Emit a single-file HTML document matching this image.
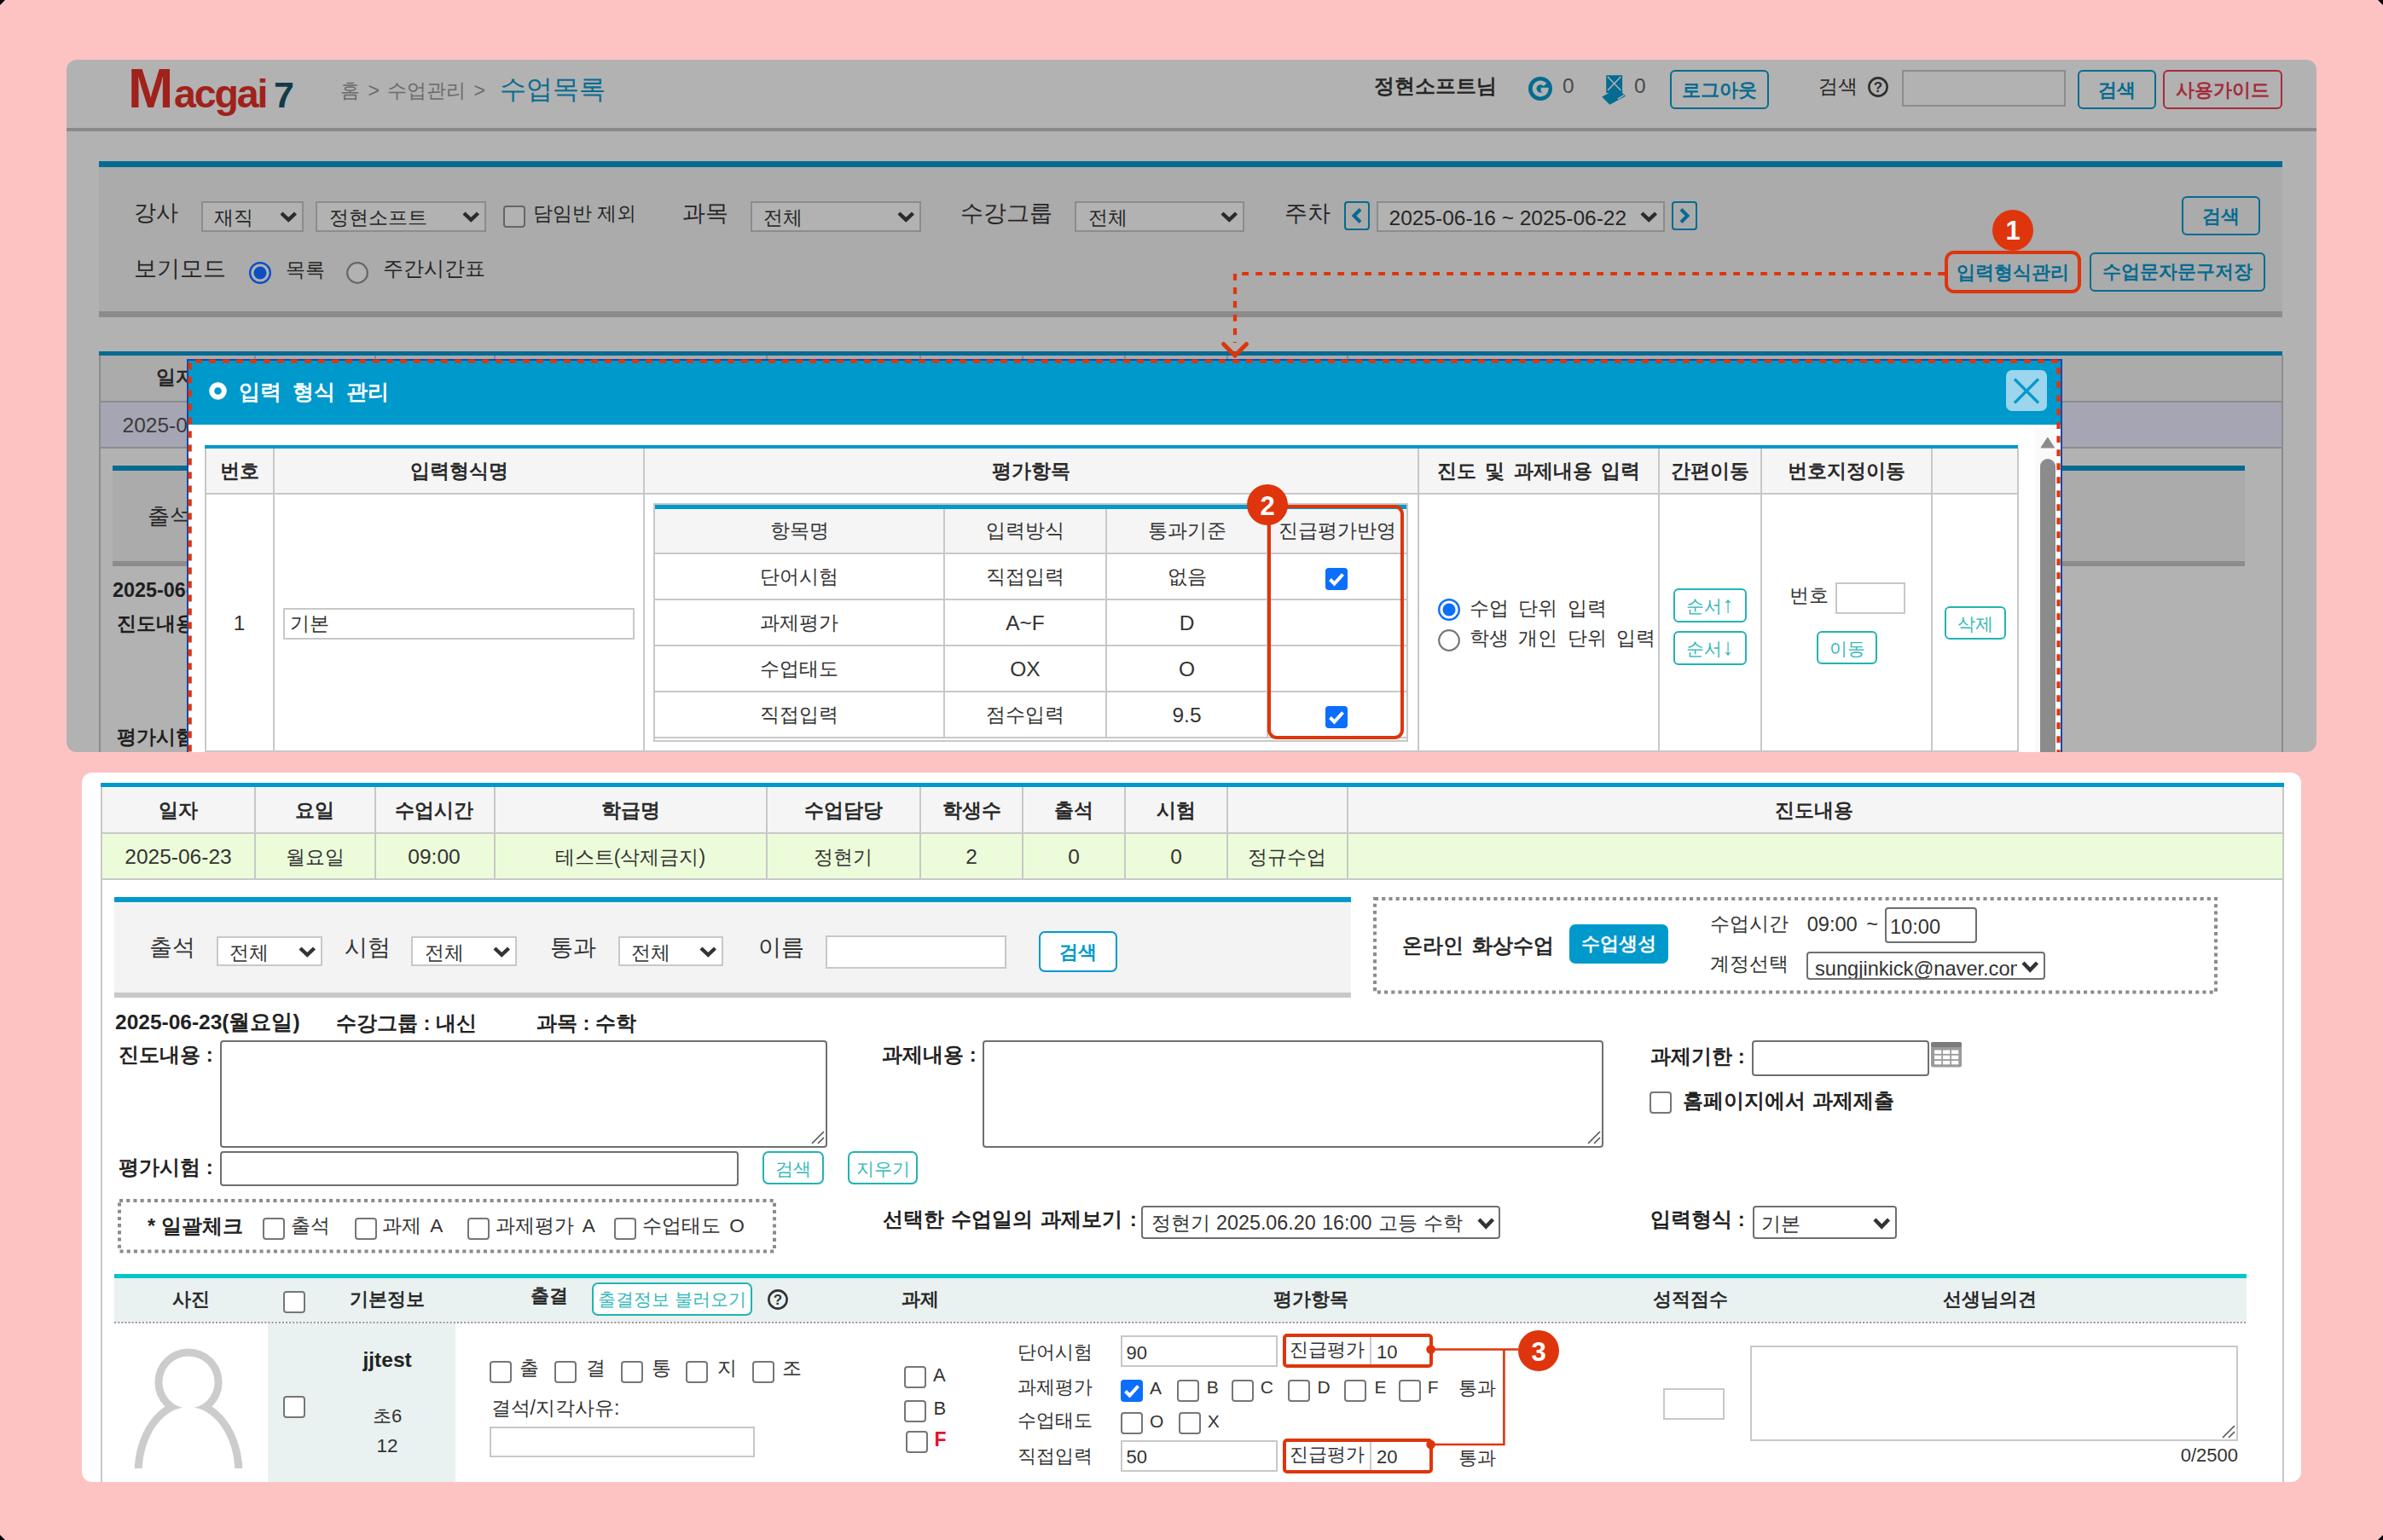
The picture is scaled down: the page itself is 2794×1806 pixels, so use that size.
<!DOCTYPE html>
<html lang="ko"><head><meta charset="utf-8"><title>Macgai7</title>
<style>
*{box-sizing:border-box;margin:0;padding:0}
html,body{width:2794px;height:1806px;overflow:hidden;background:#000}
body{font-family:"Liberation Sans",sans-serif;position:relative}
#pg{position:absolute;left:0;top:0;width:2794px;height:1806px;background:#FDC3C3;clip-path:polygon(6px 0,2788px 0,2794px 6px,2794px 1800px,2788px 1806px,6px 1806px,0 1800px,0 6px);overflow:hidden}
.a{position:absolute}
.t{position:absolute;white-space:nowrap;line-height:1}
svg{display:block;overflow:visible}
</style></head><body><div id="pg">
<div class="a" id="p1" style="left:78px;top:70px;width:2638px;height:812px;background:#B2B2B2;border-radius:12px;overflow:hidden"><div class="a" style="left:-78px;top:-70px;width:2794px;height:1806px">
<div class="a " style="left:78px;top:150px;width:2638px;height:4px;background:#8A8A8A"></div>
<div class="t" style="left:150px;top:71.824px;font-size:64px;color:#A0221B;font-weight:bold;letter-spacing:-2px">M</div>
<div class="t" style="left:204px;top:86.6377px;font-size:46.5px;color:#A0221B;font-weight:bold;letter-spacing:-2.1px">acgai</div>
<div class="t" style="left:321px;top:89.6005px;font-size:43px;color:#143B49;font-weight:bold;">7</div>
<div class="t" style="left:399px;top:94.5px;font-size:23px;color:#6B6B6B;word-spacing:3px">홈 &gt; 수업관리 &gt;</div>
<div class="t" style="left:586px;top:88.9px;font-size:31.2px;color:#0A6C90;">수업목록</div>
<div class="t" style="left:1611px;top:89.1px;font-size:23.8px;color:#262626;font-weight:bold;">정현소프트님</div>
<svg class="a" style="left:1792px;top:90px" width="28" height="28"><circle cx="14" cy="14" r="14" fill="#056B91"/><path d="M19.6,9.6 A7,7 0 1 0 21,15.2 L14.6,15.2" fill="none" stroke="#B2B2B2" stroke-width="4.8"/></svg>
<div class="t" style="left:1832px;top:88.75px;font-size:24.5px;color:#4A4A4A;">0</div>
<svg class="a" style="left:1876px;top:86px" width="32" height="38"><g fill="#056B91"><path d="M7.2,2.2 H26.1 V23 H7.2 Z"/><path d="M2.2,27.4 L11.3,36.8 L29.9,26.8 L20.5,17.5 Z"/></g><path d="M9,4 L24.3,20 M24.3,4 L9,20" stroke="#B2B2B2" stroke-width="1.5"/><path d="M20.8,30.2 L28,25.7" stroke="#B2B2B2" stroke-width="1.5"/></svg>
<div class="t" style="left:1916px;top:88.75px;font-size:24.5px;color:#4A4A4A;">0</div>
<div class="a " style="left:1958px;top:82px;width:116px;height:46px;border:2px solid #056B91;background:transparent;border-radius:6px"></div>
<div class="t" style="left:1416px;width:1200px;text-align:center;top:94.5px;font-size:22px;color:#056B91;font-weight:bold;">로그아웃</div>
<div class="t" style="left:2132px;top:89.5px;font-size:23px;color:#262626;">검색</div>
<svg class="a" style="left:2189px;top:89px" width="26" height="26"><circle cx="13" cy="13" r="10.6" fill="none" stroke="#2E2E2E" stroke-width="2.6"/><text x="13" y="19.2" text-anchor="middle" font-family="Liberation Sans, sans-serif" font-weight="bold" font-size="17" fill="#2E2E2E">?</text></svg>
<div class="a " style="left:2230px;top:82px;width:192px;height:43px;border:2px solid #8C8C8C;background:#B2B2B2"></div>
<div class="a " style="left:2436px;top:82px;width:92px;height:46px;border:2px solid #056B91;background:transparent;border-radius:6px"></div>
<div class="t" style="left:1882px;width:1200px;text-align:center;top:94.5px;font-size:22px;color:#056B91;font-weight:bold;">검색</div>
<div class="a " style="left:2536px;top:82px;width:140px;height:46px;border:2px solid #A52C3B;background:transparent;border-radius:6px"></div>
<div class="t" style="left:2006px;width:1200px;text-align:center;top:94.5px;font-size:22px;color:#A52C3B;font-weight:bold;">사용가이드</div>
<div class="a " style="left:116px;top:189px;width:2560px;height:7px;background:#056B91"></div>
<div class="a " style="left:116px;top:196px;width:2560px;height:169px;background:#ABABAB"></div>
<div class="a " style="left:116px;top:365px;width:2560px;height:7px;background:#8C8C8C"></div>
<div class="t" style="left:157px;top:237.25px;font-size:25.5px;color:#262626;">강사</div>
<div class="a " style="left:236px;top:236px;width:119.7px;height:35.7px;border:2px solid #8C8C8C;background:#B2B2B2;border-radius:0px"></div>
<div class="t" style="left:251px;top:244.15px;font-size:23.4px;color:#262626;">재직</div>
<svg class="a" style="left:326.5px;top:247.25px" width="22.5" height="13.8"><path d="M3,3 L11.25,10.8 L19.5,3" fill="none" stroke="#2B2B2B" stroke-width="4.4" stroke-linejoin="miter"/></svg>
<div class="a " style="left:370px;top:236px;width:200px;height:35.7px;border:2px solid #8C8C8C;background:#B2B2B2;border-radius:0px"></div>
<div class="t" style="left:385.5px;top:244.15px;font-size:23.4px;color:#262626;">정현소프트</div>
<svg class="a" style="left:540.5px;top:247.25px" width="22.5" height="13.8"><path d="M3,3 L11.25,10.8 L19.5,3" fill="none" stroke="#2B2B2B" stroke-width="4.4" stroke-linejoin="miter"/></svg>
<div class="a " style="left:590px;top:240.8px;width:26px;height:26px;border:2px solid #666;background:#B2B2B2;border-radius:4px"></div>
<div class="t" style="left:625px;top:238.5px;font-size:23px;color:#262626;">담임반 제외</div>
<div class="t" style="left:800px;top:236.75px;font-size:26.5px;color:#262626;">과목</div>
<div class="a " style="left:880px;top:236px;width:200px;height:35.7px;border:2px solid #8C8C8C;background:#B2B2B2;border-radius:0px"></div>
<div class="t" style="left:895px;top:244.15px;font-size:23.4px;color:#262626;">전체</div>
<svg class="a" style="left:1050.5px;top:247.25px" width="22.5" height="13.8"><path d="M3,3 L11.25,10.8 L19.5,3" fill="none" stroke="#2B2B2B" stroke-width="4.4" stroke-linejoin="miter"/></svg>
<div class="t" style="left:1125.7px;top:236.75px;font-size:26.5px;color:#262626;">수강그룹</div>
<div class="a " style="left:1260px;top:236px;width:198.5px;height:35.7px;border:2px solid #8C8C8C;background:#B2B2B2;border-radius:0px"></div>
<div class="t" style="left:1275.6px;top:244.15px;font-size:23.4px;color:#262626;">전체</div>
<svg class="a" style="left:1429.5px;top:247.25px" width="22.5" height="13.8"><path d="M3,3 L11.25,10.8 L19.5,3" fill="none" stroke="#2B2B2B" stroke-width="4.4" stroke-linejoin="miter"/></svg>
<div class="t" style="left:1505.5px;top:236.75px;font-size:26.5px;color:#262626;">주차</div>
<div class="a " style="left:1576px;top:236px;width:30px;height:34px;border:2px solid #056B91;border-radius:4px"></div>
<svg class="a" style="left:1576px;top:236px" width="30" height="34"><path d="M19,9.5 L11.5,17 L19,24.5" fill="none" stroke="#056B91" stroke-width="4"/></svg>
<div class="a " style="left:1614px;top:236px;width:338px;height:35.7px;border:2px solid #8C8C8C;background:#B2B2B2;border-radius:0px"></div>
<div class="t" style="left:1628.5px;top:243.6px;font-size:24.5px;color:#262626;">2025-06-16 ~ 2025-06-22</div>
<svg class="a" style="left:1922px;top:247.25px" width="22.5" height="13.8"><path d="M3,3 L11.25,10.8 L19.5,3" fill="none" stroke="#2B2B2B" stroke-width="4.4" stroke-linejoin="miter"/></svg>
<div class="a " style="left:1960px;top:236px;width:30px;height:34px;border:2px solid #056B91;border-radius:4px"></div>
<svg class="a" style="left:1960px;top:236px" width="30" height="34"><path d="M11,9.5 L18.5,17 L11,24.5" fill="none" stroke="#056B91" stroke-width="4"/></svg>
<div class="a " style="left:2558px;top:230px;width:92px;height:46px;border:2px solid #056B91;background:transparent;border-radius:6px"></div>
<div class="t" style="left:2004px;width:1200px;text-align:center;top:242.5px;font-size:22px;color:#056B91;font-weight:bold;">검색</div>
<div class="t" style="left:157px;top:302.25px;font-size:26.5px;color:#262626;">보기모드</div>
<svg class="a" style="left:292px;top:306.5px" width="26" height="26"><circle cx="13" cy="13" r="11.8" fill="#B2B2B2" stroke="#0B4FC2" stroke-width="2.4"/><circle cx="13" cy="13" r="7.5" fill="#0B4FC2"/></svg>
<div class="t" style="left:335px;top:304.6px;font-size:22.8px;color:#262626;">목록</div>
<svg class="a" style="left:406px;top:306.5px" width="26" height="26"><circle cx="13" cy="13" r="11.8" fill="#B2B2B2" stroke="#666" stroke-width="2.2"/></svg>
<div class="t" style="left:449px;top:304.25px;font-size:23.5px;color:#262626;">주간시간표</div>
<div class="t" style="left:1760px;width:1200px;text-align:center;top:308.6px;font-size:21.8px;color:#056B91;font-weight:bold;">입력형식관리</div>
<div class="a " style="left:2450px;top:296px;width:206px;height:45.5px;border:2px solid #056B91;background:transparent;border-radius:6px"></div>
<div class="t" style="left:1953px;width:1200px;text-align:center;top:308.35px;font-size:21.8px;color:#056B91;font-weight:bold;">수업문자문구저장</div>
<div class="a " style="left:116px;top:412px;width:2560px;height:4.5px;background:#056B91"></div>
<div class="a " style="left:116px;top:416.5px;width:2560px;height:54.5px;background:#ABABAB"></div>
<div class="a " style="left:116px;top:472px;width:2560px;height:53px;background:#A5A5B3"></div>
<div class="a " style="left:116px;top:470px;width:2560px;height:2px;background:#8C8C8C"></div>
<div class="a " style="left:116px;top:524px;width:2560px;height:2px;background:#8C8C8C"></div>
<div class="a " style="left:116px;top:416.5px;width:2px;height:465.5px;background:#8C8C8C"></div>
<div class="a " style="left:2675px;top:416.5px;width:2px;height:465.5px;background:#8C8C8C"></div>
<div class="a " style="left:298px;top:416.5px;width:2px;height:4.5px;background:#8C8C8C"></div>
<div class="a " style="left:438.5px;top:416.5px;width:2px;height:4.5px;background:#8C8C8C"></div>
<div class="a " style="left:578.5px;top:416.5px;width:2px;height:4.5px;background:#8C8C8C"></div>
<div class="a " style="left:898px;top:416.5px;width:2px;height:4.5px;background:#8C8C8C"></div>
<div class="a " style="left:1078px;top:416.5px;width:2px;height:4.5px;background:#8C8C8C"></div>
<div class="a " style="left:1198px;top:416.5px;width:2px;height:4.5px;background:#8C8C8C"></div>
<div class="a " style="left:1318px;top:416.5px;width:2px;height:4.5px;background:#8C8C8C"></div>
<div class="a " style="left:1438px;top:416.5px;width:2px;height:4.5px;background:#8C8C8C"></div>
<div class="a " style="left:1578.5px;top:416.5px;width:2px;height:4.5px;background:#8C8C8C"></div>
<div class="t" style="left:183.4px;top:431.75px;font-size:22.5px;color:#262626;font-weight:bold;">일자</div>
<div class="t" style="left:143.5px;top:486.75px;font-size:24.5px;color:#3A3A3A;">2025-06</div>
<div class="a " style="left:132px;top:546px;width:2500px;height:6px;background:#056B91"></div>
<div class="a " style="left:132px;top:552px;width:2500px;height:106px;background:#ABABAB"></div>
<div class="a " style="left:132px;top:658px;width:2500px;height:6px;background:#8C8C8C"></div>
<div class="t" style="left:173px;top:593.25px;font-size:25.5px;color:#262626;">출석</div>
<div class="t" style="left:132px;top:681.3px;font-size:23.4px;color:#1E1E1E;font-weight:bold;">2025-06-23</div>
<div class="t" style="left:137px;top:719.5px;font-size:23px;color:#1E1E1E;font-weight:bold;">진도내용</div>
<div class="t" style="left:137px;top:853px;font-size:23px;color:#1E1E1E;font-weight:bold;">평가시험</div>
<div class="a " style="left:218.5px;top:420.5px;width:2199px;height:479.5px;background:#fff;border:2px solid #1A47A5"></div>
<div class="a " style="left:220.5px;top:422.5px;width:2195px;height:75px;background:#0099CC"></div>
<svg class="a" style="left:245px;top:447.5px" width="21" height="21"><circle cx="10.5" cy="10.5" r="7.3" fill="none" stroke="#fff" stroke-width="6"/></svg>
<div class="t" style="left:280px;top:447.7px;font-size:24.6px;color:#fff;font-weight:bold;word-spacing:6px">입력 형식 관리</div>
<div class="a " style="left:2352px;top:433.5px;width:48px;height:48.5px;background:#9DD5EC;border-radius:7px"></div>
<svg class="a" style="left:2352px;top:433.5px" width="48" height="48.5"><path d="M10,10.5 L38,38.5 M38,10.5 L10,38.5" stroke="#0099CC" stroke-width="3.2"/></svg>
<div class="a " style="left:2386px;top:502px;width:25px;height:398px;background:#FAFAFA"></div>
<svg class="a" style="left:2391px;top:510px" width="20" height="18"><path d="M2,15 L9.8,3 L17.6,15 Z" fill="#8C8C8C" stroke="#8C8C8C" stroke-width="1" stroke-linejoin="round"/></svg>
<div class="a " style="left:2392px;top:538px;width:17.5px;height:362px;background:#8C8C8C;border-radius:9px 9px 0 0"></div>
<div class="a " style="left:240px;top:522px;width:2126px;height:4px;background:#0099CC"></div>
<div class="a " style="left:240px;top:526px;width:2126px;height:53px;background:#F5F5F5"></div>
<div class="a " style="left:240px;top:578px;width:2126px;height:2px;background:#C8C8C8"></div>
<div class="a " style="left:240px;top:880px;width:2126px;height:2px;background:#C8C8C8"></div>
<div class="a " style="left:240px;top:526px;width:2px;height:374px;background:#C8C8C8"></div>
<div class="a " style="left:320px;top:526px;width:2px;height:374px;background:#C8C8C8"></div>
<div class="a " style="left:754px;top:526px;width:2px;height:374px;background:#C8C8C8"></div>
<div class="a " style="left:1662px;top:526px;width:2px;height:374px;background:#C8C8C8"></div>
<div class="a " style="left:1944px;top:526px;width:2px;height:374px;background:#C8C8C8"></div>
<div class="a " style="left:2064px;top:526px;width:2px;height:374px;background:#C8C8C8"></div>
<div class="a " style="left:2264px;top:526px;width:2px;height:374px;background:#C8C8C8"></div>
<div class="a " style="left:2364.5px;top:526px;width:2px;height:374px;background:#C8C8C8"></div>
<div class="t" style="left:-319.5px;width:1200px;text-align:center;top:540.5px;font-size:23px;color:#2a2a2a;font-weight:bold;">번호</div>
<div class="t" style="left:-62px;width:1200px;text-align:center;top:540.5px;font-size:23px;color:#2a2a2a;font-weight:bold;">입력형식명</div>
<div class="t" style="left:609px;width:1200px;text-align:center;top:540.5px;font-size:23px;color:#2a2a2a;font-weight:bold;">평가항목</div>
<div class="t" style="left:1204px;width:1200px;text-align:center;top:540.5px;font-size:23px;color:#2a2a2a;font-weight:bold;word-spacing:4px">진도 및 과제내용 입력</div>
<div class="t" style="left:1405px;width:1200px;text-align:center;top:540.5px;font-size:23px;color:#2a2a2a;font-weight:bold;">간편이동</div>
<div class="t" style="left:1565px;width:1200px;text-align:center;top:540.5px;font-size:23px;color:#2a2a2a;font-weight:bold;">번호지정이동</div>
<div class="t" style="left:-319.5px;width:1200px;text-align:center;top:718.75px;font-size:24.5px;color:#333;">1</div>
<div class="a " style="left:332px;top:713px;width:412px;height:37px;border:2px solid #C8C8C8;background:#fff"></div>
<div class="t" style="left:339.5px;top:720.1px;font-size:22.8px;color:#333;">기본</div>
<div class="a " style="left:766px;top:590px;width:885px;height:280px;border:2px solid #C8C8C8;background:#fff"></div>
<div class="a " style="left:768px;top:592px;width:881px;height:4.5px;background:#0099CC"></div>
<div class="a " style="left:768px;top:596.5px;width:881px;height:51.5px;background:#F5F5F5"></div>
<div class="a " style="left:768px;top:648px;width:881px;height:2px;background:#C8C8C8"></div>
<div class="a " style="left:768px;top:702px;width:881px;height:2px;background:#C8C8C8"></div>
<div class="a " style="left:768px;top:756px;width:881px;height:2px;background:#C8C8C8"></div>
<div class="a " style="left:768px;top:810px;width:881px;height:2px;background:#C8C8C8"></div>
<div class="a " style="left:768px;top:864px;width:881px;height:2px;background:#C8C8C8"></div>
<div class="a " style="left:1106px;top:596.5px;width:2px;height:269.5px;background:#C8C8C8"></div>
<div class="a " style="left:1296px;top:596.5px;width:2px;height:269.5px;background:#C8C8C8"></div>
<div class="a " style="left:1485px;top:596.5px;width:2px;height:269.5px;background:#C8C8C8"></div>
<div class="t" style="left:337px;width:1200px;text-align:center;top:610.9px;font-size:23.2px;color:#333;">항목명</div>
<div class="t" style="left:602px;width:1200px;text-align:center;top:610.9px;font-size:23.2px;color:#333;">입력방식</div>
<div class="t" style="left:791.5px;width:1200px;text-align:center;top:610.9px;font-size:23.2px;color:#333;">통과기준</div>
<div class="t" style="left:967.5px;width:1200px;text-align:center;top:610.9px;font-size:23.2px;color:#333;">진급평가반영</div>
<div class="t" style="left:337px;width:1200px;text-align:center;top:664.9px;font-size:23.2px;color:#333;">단어시험</div>
<div class="t" style="left:602px;width:1200px;text-align:center;top:664.9px;font-size:23.2px;color:#333;">직접입력</div>
<div class="t" style="left:791.5px;width:1200px;text-align:center;top:664.9px;font-size:23.2px;color:#333;">없음</div>
<div class="t" style="left:337px;width:1200px;text-align:center;top:718.9px;font-size:23.2px;color:#333;">과제평가</div>
<div class="t" style="left:602px;width:1200px;text-align:center;top:719.25px;font-size:24.5px;color:#333;">A~F</div>
<div class="t" style="left:791.5px;width:1200px;text-align:center;top:719.25px;font-size:24.5px;color:#333;">D</div>
<div class="t" style="left:337px;width:1200px;text-align:center;top:772.9px;font-size:23.2px;color:#333;">수업태도</div>
<div class="t" style="left:602px;width:1200px;text-align:center;top:773.25px;font-size:24.5px;color:#333;">OX</div>
<div class="t" style="left:791.5px;width:1200px;text-align:center;top:773.25px;font-size:24.5px;color:#333;">O</div>
<div class="t" style="left:337px;width:1200px;text-align:center;top:826.9px;font-size:23.2px;color:#333;">직접입력</div>
<div class="t" style="left:602px;width:1200px;text-align:center;top:826.9px;font-size:23.2px;color:#333;">점수입력</div>
<div class="t" style="left:791.5px;width:1200px;text-align:center;top:827.25px;font-size:24.5px;color:#333;">9.5</div>
<svg class="a" style="left:1554px;top:666px" width="26" height="26"><rect x="0" y="0" width="26" height="26" rx="4" fill="#0B6EFD"/><path d="M5.5,13.5 L10.5,18.5 L20.5,7.5" fill="none" stroke="#fff" stroke-width="4"/></svg>
<svg class="a" style="left:1554px;top:828px" width="26" height="26"><rect x="0" y="0" width="26" height="26" rx="4" fill="#0B6EFD"/><path d="M5.5,13.5 L10.5,18.5 L20.5,7.5" fill="none" stroke="#fff" stroke-width="4"/></svg>
<svg class="a" style="left:1686px;top:702px" width="26" height="26"><circle cx="13" cy="13" r="11.8" fill="#fff" stroke="#0B6EFD" stroke-width="2.4"/><circle cx="13" cy="13" r="7.5" fill="#0B6EFD"/></svg>
<svg class="a" style="left:1686px;top:738px" width="26" height="26"><circle cx="13" cy="13" r="11.8" fill="#fff" stroke="#767676" stroke-width="2.2"/></svg>
<div class="t" style="left:1723px;top:701.5px;font-size:23px;color:#333;word-spacing:5px">수업 단위 입력</div>
<div class="t" style="left:1723px;top:736.5px;font-size:23px;color:#333;word-spacing:5px">학생 개인 단위 입력</div>
<div class="a " style="left:1962px;top:690px;width:86px;height:40px;border:2px solid #22B3B3;background:#fff;border-radius:6px"></div>
<div class="t" style="left:1405px;width:1200px;text-align:center;top:700px;font-size:21px;color:#35B9B9;">순서<span style="font-size:27px;line-height:0">↑</span></div>
<div class="a " style="left:1962px;top:740px;width:86px;height:40px;border:2px solid #22B3B3;background:#fff;border-radius:6px"></div>
<div class="t" style="left:1405px;width:1200px;text-align:center;top:750px;font-size:21px;color:#35B9B9;">순서<span style="font-size:27px;line-height:0">↓</span></div>
<div class="t" style="left:2098px;top:687.75px;font-size:22.5px;color:#333;">번호</div>
<div class="a " style="left:2152px;top:682.5px;width:82px;height:37.5px;border:2px solid #C8C8C8;background:#fff"></div>
<div class="a " style="left:2130px;top:740px;width:71px;height:39px;border:2px solid #22B3B3;background:#fff;border-radius:6px"></div>
<div class="t" style="left:1565.5px;width:1200px;text-align:center;top:749.5px;font-size:21px;color:#35B9B9;">이동</div>
<div class="a " style="left:2280px;top:711px;width:72px;height:39px;border:2px solid #22B3B3;background:#fff;border-radius:6px"></div>
<div class="t" style="left:1716px;width:1200px;text-align:center;top:720.5px;font-size:21px;color:#35B9B9;">삭제</div>
<div class="a " style="left:1486px;top:592px;width:160px;height:274.5px;border:4px solid #DF350C;border-radius:11px"></div>
<div class="a" style="left:1462px;top:568px;width:48px;height:48px;border-radius:24px;background:#DF350C"></div>
<div class="t" style="left:886px;width:1200px;text-align:center;top:577.5px;font-size:31px;color:#fff;font-weight:bold;">2</div>
<div class="a " style="left:2280px;top:294px;width:160px;height:49.5px;border:4px solid #DF350C;border-radius:11px"></div>
<div class="a" style="left:2336px;top:245.5px;width:48px;height:48px;border-radius:24px;background:#DF350C"></div>
<div class="t" style="left:1760px;width:1200px;text-align:center;top:255px;font-size:31px;color:#fff;font-weight:bold;">1</div>
<svg class="a" style="left:0;top:0" width="2794" height="900"><g fill="none" stroke="#DF350C"><path d="M2280,321 H1448 V402" stroke-width="4.2" stroke-dasharray="7.8 8.2"/><path d="M1434.5,403.5 L1448,417 L1461.5,403.5" stroke-width="5" stroke-linecap="round" stroke-linejoin="round"/><path d="M2413.5,900 V423.7 H222.7 V900" stroke-width="4.2" stroke-dasharray="7.8 8.2" stroke-dashoffset="3"/></g></svg>
</div></div>
<div class="a" id="p2" style="left:96px;top:906px;width:2602px;height:832px;background:#fff;border-radius:12px;overflow:hidden"><div class="a" style="left:-96px;top:-906px;width:2794px;height:1806px">
<div class="a " style="left:118px;top:918px;width:2560px;height:5px;background:#0099CC"></div>
<div class="a " style="left:118px;top:923px;width:2560px;height:54px;background:#F5F5F5"></div>
<div class="a " style="left:118px;top:978px;width:2560px;height:53px;background:#ECFCDA"></div>
<div class="a " style="left:118px;top:976px;width:2560px;height:2px;background:#C8C8C8"></div>
<div class="a " style="left:118px;top:1030px;width:2560px;height:2px;background:#C8C8C8"></div>
<div class="a " style="left:118px;top:923px;width:2px;height:817px;background:#C8C8C8"></div>
<div class="a " style="left:2676px;top:923px;width:2px;height:817px;background:#C8C8C8"></div>
<div class="a " style="left:298px;top:923px;width:2px;height:108px;background:#C8C8C8"></div>
<div class="a " style="left:438.5px;top:923px;width:2px;height:108px;background:#C8C8C8"></div>
<div class="a " style="left:578.5px;top:923px;width:2px;height:108px;background:#C8C8C8"></div>
<div class="a " style="left:898px;top:923px;width:2px;height:108px;background:#C8C8C8"></div>
<div class="a " style="left:1078px;top:923px;width:2px;height:108px;background:#C8C8C8"></div>
<div class="a " style="left:1198px;top:923px;width:2px;height:108px;background:#C8C8C8"></div>
<div class="a " style="left:1318px;top:923px;width:2px;height:108px;background:#C8C8C8"></div>
<div class="a " style="left:1438px;top:923px;width:2px;height:108px;background:#C8C8C8"></div>
<div class="a " style="left:1578.5px;top:923px;width:2px;height:108px;background:#C8C8C8"></div>
<div class="t" style="left:-391px;width:1200px;text-align:center;top:939px;font-size:23px;color:#2a2a2a;font-weight:bold;">일자</div>
<div class="t" style="left:-231px;width:1200px;text-align:center;top:939px;font-size:23px;color:#2a2a2a;font-weight:bold;">요일</div>
<div class="t" style="left:-91px;width:1200px;text-align:center;top:939px;font-size:23px;color:#2a2a2a;font-weight:bold;">수업시간</div>
<div class="t" style="left:139px;width:1200px;text-align:center;top:939px;font-size:23px;color:#2a2a2a;font-weight:bold;">학급명</div>
<div class="t" style="left:388.6px;width:1200px;text-align:center;top:939px;font-size:23px;color:#2a2a2a;font-weight:bold;">수업담당</div>
<div class="t" style="left:539px;width:1200px;text-align:center;top:939px;font-size:23px;color:#2a2a2a;font-weight:bold;">학생수</div>
<div class="t" style="left:659px;width:1200px;text-align:center;top:939px;font-size:23px;color:#2a2a2a;font-weight:bold;">출석</div>
<div class="t" style="left:779px;width:1200px;text-align:center;top:939px;font-size:23px;color:#2a2a2a;font-weight:bold;">시험</div>
<div class="t" style="left:1527px;width:1200px;text-align:center;top:939px;font-size:23px;color:#2a2a2a;font-weight:bold;">진도내용</div>
<div class="t" style="left:-391px;width:1200px;text-align:center;top:992.75px;font-size:24.5px;color:#333;">2025-06-23</div>
<div class="t" style="left:-231px;width:1200px;text-align:center;top:993.5px;font-size:23px;color:#333;">월요일</div>
<div class="t" style="left:-91px;width:1200px;text-align:center;top:992.75px;font-size:24.5px;color:#333;">09:00</div>
<div class="t" style="left:139px;width:1200px;text-align:center;top:993.5px;font-size:23px;color:#333;">테스트(삭제금지)</div>
<div class="t" style="left:388.6px;width:1200px;text-align:center;top:993.5px;font-size:23px;color:#333;">정현기</div>
<div class="t" style="left:539px;width:1200px;text-align:center;top:992.75px;font-size:24.5px;color:#333;">2</div>
<div class="t" style="left:659px;width:1200px;text-align:center;top:992.75px;font-size:24.5px;color:#333;">0</div>
<div class="t" style="left:779px;width:1200px;text-align:center;top:992.75px;font-size:24.5px;color:#333;">0</div>
<div class="t" style="left:909px;width:1200px;text-align:center;top:993.5px;font-size:23px;color:#333;">정규수업</div>
<div class="a " style="left:134px;top:1052px;width:1450px;height:6px;background:#0099CC"></div>
<div class="a " style="left:134px;top:1058px;width:1450px;height:105.5px;background:#F3F3F3"></div>
<div class="a " style="left:134px;top:1163.5px;width:1450px;height:6.5px;background:#C8C8C8"></div>
<div class="t" style="left:174.6px;top:1098.25px;font-size:26.5px;color:#333;">출석</div>
<div class="a " style="left:254px;top:1098px;width:124px;height:35px;border:2px solid #C8C8C8;background:#fff;border-radius:0px"></div>
<div class="t" style="left:269px;top:1105.8px;font-size:23.4px;color:#333;">전체</div>
<svg class="a" style="left:348.5px;top:1108.9px" width="22.5" height="13.8"><path d="M3,3 L11.25,10.8 L19.5,3" fill="none" stroke="#333" stroke-width="4.4" stroke-linejoin="miter"/></svg>
<div class="t" style="left:404px;top:1098.25px;font-size:26.5px;color:#333;">시험</div>
<div class="a " style="left:482px;top:1098px;width:124px;height:35px;border:2px solid #C8C8C8;background:#fff;border-radius:0px"></div>
<div class="t" style="left:497.7px;top:1105.8px;font-size:23.4px;color:#333;">전체</div>
<svg class="a" style="left:576.5px;top:1108.9px" width="22.5" height="13.8"><path d="M3,3 L11.25,10.8 L19.5,3" fill="none" stroke="#333" stroke-width="4.4" stroke-linejoin="miter"/></svg>
<div class="t" style="left:644.6px;top:1098.25px;font-size:26.5px;color:#333;">통과</div>
<div class="a " style="left:724.5px;top:1098px;width:123.5px;height:35px;border:2px solid #C8C8C8;background:#fff;border-radius:0px"></div>
<div class="t" style="left:740px;top:1105.8px;font-size:23.4px;color:#333;">전체</div>
<svg class="a" style="left:818.5px;top:1108.9px" width="22.5" height="13.8"><path d="M3,3 L11.25,10.8 L19.5,3" fill="none" stroke="#333" stroke-width="4.4" stroke-linejoin="miter"/></svg>
<div class="t" style="left:889px;top:1098.25px;font-size:26.5px;color:#333;">이름</div>
<div class="a " style="left:968px;top:1096.5px;width:212px;height:39.1px;border:2px solid #C8C8C8;background:#fff"></div>
<div class="a " style="left:1218px;top:1092px;width:92px;height:48px;border:2px solid #0099CC;background:#fff;border-radius:7px"></div>
<div class="t" style="left:664px;width:1200px;text-align:center;top:1105.5px;font-size:22px;color:#0099CC;font-weight:bold;">검색</div>
<svg class="a" style="left:1610px;top:1052px" width="990" height="113.5"><rect x="2.0" y="2.0" width="986" height="109.5" fill="none" stroke="#8C8C8C" stroke-width="4" stroke-dasharray="4.1 4.1"/></svg>
<div class="t" style="left:1644px;top:1097px;font-size:24px;color:#2a2a2a;font-weight:bold;word-spacing:3px">온라인 화상수업</div>
<div class="a " style="left:1840px;top:1083.6px;width:116px;height:46.4px;background:#0099CC;border-radius:7px"></div>
<div class="t" style="left:1298px;width:1200px;text-align:center;top:1096.1px;font-size:21.8px;color:#fff;font-weight:bold;">수업생성</div>
<div class="t" style="left:2005px;top:1072.35px;font-size:23.3px;color:#333;">수업시간</div>
<div class="t" style="left:2118.7px;top:1073.2px;font-size:23.6px;color:#333;word-spacing:4px">09:00 ~</div>
<div class="a " style="left:2209.5px;top:1063.8px;width:108.5px;height:42.2px;border:2px solid #6F6F6F;background:#fff;border-radius:4px"></div>
<div class="t" style="left:2216px;top:1076.2px;font-size:23.6px;color:#333;">10:00</div>
<div class="t" style="left:2005px;top:1119.35px;font-size:23.3px;color:#333;">계정선택</div>
<div class="a " style="left:2118px;top:1116px;width:279.5px;height:33.4px;border:2px solid #6F6F6F;background:#fff;border-radius:4px;overflow:hidden"><div class="t" style="left:8px;top:6.5px;font-size:23.6px;color:#333;width:237px;overflow:hidden">sungjinkick@naver.com</div></div>
<svg class="a" style="left:2368.5px;top:1126px" width="22.5" height="14.6"><path d="M3,3 L11.25,11.6 L19.5,3" fill="none" stroke="#333" stroke-width="4.4" stroke-linejoin="miter"/></svg>
<div class="t" style="left:135px;top:1187.25px;font-size:24.5px;color:#222;font-weight:bold;">2025-06-23(월요일)</div>
<div class="t" style="left:394px;top:1187.6px;font-size:23.8px;color:#222;font-weight:bold;">수강그룹 : 내신</div>
<div class="t" style="left:629px;top:1187.6px;font-size:23.8px;color:#222;font-weight:bold;">과목 : 수학</div>
<div class="t" style="left:139px;top:1224.5px;font-size:24px;color:#222;font-weight:bold;">진도내용 :</div>
<div class="a " style="left:257.6px;top:1220px;width:712.8px;height:125.5px;border:2px solid #6F6F6F;background:#fff;border-radius:4px"></div>
<svg class="a" style="left:950px;top:1325px" width="18" height="18"><path d="M2,16 L16,2 M9,16 L16,9" stroke="#555" stroke-width="1.6"/></svg>
<div class="t" style="left:1034px;top:1224.5px;font-size:24px;color:#222;font-weight:bold;">과제내용 :</div>
<div class="a " style="left:1152.3px;top:1220px;width:728.1px;height:125.5px;border:2px solid #6F6F6F;background:#fff;border-radius:4px"></div>
<svg class="a" style="left:1860px;top:1325px" width="18" height="18"><path d="M2,16 L16,2 M9,16 L16,9" stroke="#555" stroke-width="1.6"/></svg>
<div class="t" style="left:1935px;top:1227px;font-size:24px;color:#222;font-weight:bold;">과제기한 :</div>
<div class="a " style="left:2054px;top:1220px;width:207.5px;height:42px;border:2px solid #6F6F6F;background:#fff;border-radius:4px"></div>
<svg class="a" style="left:2264px;top:1222px" width="36" height="30"><rect x="0" y="0" width="36" height="29.5" rx="2.5" fill="#9A9A9A"/><rect x="0" y="0" width="36" height="6" rx="2" fill="#7C7C7C"/><rect x="4" y="9.5" width="8.3" height="4.4" fill="#fff"/><rect x="14" y="9.5" width="8.3" height="4.4" fill="#fff"/><rect x="24" y="9.5" width="8.3" height="4.4" fill="#fff"/><rect x="4" y="15.7" width="8.3" height="4.4" fill="#fff"/><rect x="14" y="15.7" width="8.3" height="4.4" fill="#fff"/><rect x="24" y="15.7" width="8.3" height="4.4" fill="#fff"/><rect x="4" y="21.9" width="8.3" height="4.4" fill="#fff"/><rect x="14" y="21.9" width="8.3" height="4.4" fill="#fff"/><rect x="24" y="21.9" width="8.3" height="4.4" fill="#fff"/></svg>
<div class="a " style="left:1934px;top:1280px;width:26px;height:26px;border:2px solid #767676;background:#fff;border-radius:4px"></div>
<div class="t" style="left:1973px;top:1279.05px;font-size:23.9px;color:#222;font-weight:bold;word-spacing:1px">홈페이지에서 과제제출</div>
<div class="t" style="left:139px;top:1357px;font-size:24px;color:#222;font-weight:bold;">평가시험 :</div>
<div class="a " style="left:258px;top:1350px;width:608px;height:41px;border:2px solid #6F6F6F;background:#fff;border-radius:4px"></div>
<div class="a " style="left:894px;top:1350.4px;width:72px;height:39.1px;border:2px solid #22B3B3;background:#fff;border-radius:7px"></div>
<div class="t" style="left:330px;width:1200px;text-align:center;top:1359.95px;font-size:21px;color:#35B9B9;">검색</div>
<div class="a " style="left:994px;top:1350.4px;width:82px;height:39.1px;border:2px solid #22B3B3;background:#fff;border-radius:7px"></div>
<div class="t" style="left:435px;width:1200px;text-align:center;top:1359.95px;font-size:21px;color:#35B9B9;">지우기</div>
<svg class="a" style="left:138px;top:1406px" width="772" height="63.4"><rect x="2.0" y="2.0" width="768" height="59.4" fill="none" stroke="#8C8C8C" stroke-width="4" stroke-dasharray="4.1 4.1"/></svg>
<div class="t" style="left:173px;top:1427.25px;font-size:23.5px;color:#222;font-weight:bold;">* 일괄체크</div>
<div class="a " style="left:307.6px;top:1427.6px;width:26px;height:26px;border:2px solid #767676;background:#fff;border-radius:4px"></div>
<div class="t" style="left:340.5px;top:1426.7px;font-size:22.6px;color:#333;">출석</div>
<div class="a " style="left:416px;top:1427.6px;width:26px;height:26px;border:2px solid #767676;background:#fff;border-radius:4px"></div>
<div class="t" style="left:448px;top:1426.7px;font-size:22.6px;color:#333;word-spacing:4px">과제 A</div>
<div class="a " style="left:547.7px;top:1427.6px;width:26px;height:26px;border:2px solid #767676;background:#fff;border-radius:4px"></div>
<div class="t" style="left:580.6px;top:1426.7px;font-size:22.6px;color:#333;word-spacing:4px">과제평가 A</div>
<div class="a " style="left:719.5px;top:1427.6px;width:26px;height:26px;border:2px solid #767676;background:#fff;border-radius:4px"></div>
<div class="t" style="left:753px;top:1426.7px;font-size:22.6px;color:#333;word-spacing:4px">수업태도 O</div>
<div class="t" style="left:1034.6px;top:1417.9px;font-size:24.2px;color:#222;font-weight:bold;word-spacing:2px">선택한 수업일의 과제보기 :</div>
<div class="a " style="left:1338.4px;top:1414.4px;width:420.6px;height:38.8px;border:2px solid #6F6F6F;background:#fff;border-radius:4px"></div>
<div class="t" style="left:1349.6px;top:1423.35px;font-size:23.3px;color:#333;word-spacing:1px">정현기 2025.06.20 16:00 고등 수학</div>
<svg class="a" style="left:1731px;top:1427px" width="22.5" height="14.6"><path d="M3,3 L11.25,11.6 L19.5,3" fill="none" stroke="#333" stroke-width="4.4" stroke-linejoin="miter"/></svg>
<div class="t" style="left:1935px;top:1418px;font-size:24px;color:#222;font-weight:bold;">입력형식 :</div>
<div class="a " style="left:2054.5px;top:1414.4px;width:169.1px;height:38.8px;border:2px solid #6F6F6F;background:#fff;border-radius:4px"></div>
<div class="t" style="left:2065px;top:1423.6px;font-size:22.8px;color:#333;">기본</div>
<svg class="a" style="left:2195px;top:1427px" width="22.5" height="14.6"><path d="M3,3 L11.25,11.6 L19.5,3" fill="none" stroke="#333" stroke-width="4.4" stroke-linejoin="miter"/></svg>
<div class="a " style="left:134px;top:1494px;width:2500px;height:4.5px;background:#06C5C5"></div>
<div class="a " style="left:134px;top:1498.5px;width:2500px;height:51.5px;background:#E9F1F1"></div>
<svg class="a" style="left:134px;top:1550px" width="2500" height="2"><path d="M0,1 H2500" stroke="#9C9C9C" stroke-width="2.2" stroke-dasharray="2.2 1.9"/></svg>
<div class="a " style="left:314px;top:1552px;width:220px;height:188px;background:#E9F1F1"></div>
<div class="t" style="left:43.6px;width:1200px;text-align:center;top:1509.2px;font-size:21.6px;color:#2a2a2a;font-weight:bold;">출결</div>
<div class="t" style="left:-376.5px;width:1200px;text-align:center;top:1512.7px;font-size:21.6px;color:#2a2a2a;font-weight:bold;">사진</div>
<div class="t" style="left:-146px;width:1200px;text-align:center;top:1512.7px;font-size:21.6px;color:#2a2a2a;font-weight:bold;">기본정보</div>
<div class="t" style="left:478.5px;width:1200px;text-align:center;top:1512.7px;font-size:21.6px;color:#2a2a2a;font-weight:bold;">과제</div>
<div class="t" style="left:937px;width:1200px;text-align:center;top:1512.7px;font-size:21.6px;color:#2a2a2a;font-weight:bold;">평가항목</div>
<div class="t" style="left:1381.6px;width:1200px;text-align:center;top:1512.7px;font-size:21.6px;color:#2a2a2a;font-weight:bold;">성적점수</div>
<div class="t" style="left:1733px;width:1200px;text-align:center;top:1512.7px;font-size:21.6px;color:#2a2a2a;font-weight:bold;">선생님의견</div>
<div class="a " style="left:331.7px;top:1514px;width:26px;height:26px;border:2px solid #767676;background:#fff;border-radius:4px"></div>
<div class="a " style="left:694px;top:1504px;width:188px;height:39.4px;border:2px solid #22B3B3;background:#fff;border-radius:7px"></div>
<div class="t" style="left:188px;width:1200px;text-align:center;top:1513.9px;font-size:20.6px;color:#35B9B9;">출결정보 불러오기</div>
<svg class="a" style="left:899px;top:1511px" width="26" height="26"><circle cx="13" cy="13" r="10.6" fill="none" stroke="#333" stroke-width="2.6"/><text x="13" y="19.2" text-anchor="middle" font-family="Liberation Sans, sans-serif" font-weight="bold" font-size="17" fill="#333">?</text></svg>
<svg class="a" style="left:150px;top:1575px;overflow:hidden" width="142" height="147"><g fill="#CCCCCC"><circle cx="71" cy="46" r="39.6"/><ellipse cx="71" cy="152" rx="63.4" ry="86"/></g><g fill="#fff"><circle cx="71" cy="46" r="30.6"/><ellipse cx="71" cy="152" rx="54.4" ry="77"/></g></svg>
<div class="a " style="left:331.7px;top:1636.6px;width:26px;height:26px;border:2px solid #767676;background:#fff;border-radius:4px"></div>
<div class="t" style="left:425.5px;top:1582.96px;font-size:24.5px;color:#222;font-weight:bold;">jjtest</div>
<div class="t" style="left:-146px;width:1200px;text-align:center;top:1650px;font-size:22px;color:#333;">초6</div>
<div class="t" style="left:-146px;width:1200px;text-align:center;top:1685.25px;font-size:22.5px;color:#333;">12</div>
<div class="a " style="left:574px;top:1596.3px;width:26px;height:26px;border:2px solid #767676;background:#fff;border-radius:4px"></div>
<div class="t" style="left:609px;top:1593.7px;font-size:22.6px;color:#333;">출</div>
<div class="a " style="left:650px;top:1596.3px;width:26px;height:26px;border:2px solid #767676;background:#fff;border-radius:4px"></div>
<div class="t" style="left:687px;top:1593.7px;font-size:22.6px;color:#333;">결</div>
<div class="a " style="left:727.7px;top:1596.3px;width:26px;height:26px;border:2px solid #767676;background:#fff;border-radius:4px"></div>
<div class="t" style="left:763.5px;top:1593.7px;font-size:22.6px;color:#333;">통</div>
<div class="a " style="left:804px;top:1596.3px;width:26px;height:26px;border:2px solid #767676;background:#fff;border-radius:4px"></div>
<div class="t" style="left:841px;top:1593.7px;font-size:22.6px;color:#333;">지</div>
<div class="a " style="left:882px;top:1596.3px;width:26px;height:26px;border:2px solid #767676;background:#fff;border-radius:4px"></div>
<div class="t" style="left:917px;top:1593.7px;font-size:22.6px;color:#333;">조</div>
<div class="t" style="left:575.6px;top:1639.5px;font-size:23px;color:#333;">결석/지각사유:</div>
<div class="a " style="left:574px;top:1672.7px;width:311.4px;height:36.7px;border:2px solid #C8C8C8;background:#fff"></div>
<div class="a " style="left:1059.6px;top:1602px;width:26px;height:26px;border:2px solid #767676;background:#fff;border-radius:4px"></div>
<div class="t" style="left:1094px;top:1602px;font-size:22px;color:#333;">A</div>
<div class="a " style="left:1059.6px;top:1641.9px;width:26px;height:26px;border:2px solid #767676;background:#fff;border-radius:4px"></div>
<div class="t" style="left:1094.5px;top:1641px;font-size:22px;color:#333;">B</div>
<div class="a " style="left:1062px;top:1678px;width:26px;height:26px;border:2px solid #767676;background:#fff;border-radius:4px"></div>
<div class="t" style="left:1095.5px;top:1677px;font-size:23px;color:#E8102E;font-weight:bold;">F</div>
<div class="t" style="left:1193px;top:1575.2px;font-size:21.6px;color:#333;">단어시험</div>
<div class="t" style="left:1193px;top:1615.7px;font-size:21.6px;color:#333;">과제평가</div>
<div class="t" style="left:1193px;top:1655.2px;font-size:21.6px;color:#333;">수업태도</div>
<div class="t" style="left:1193px;top:1697.2px;font-size:21.6px;color:#333;">직접입력</div>
<div class="a " style="left:1314px;top:1566px;width:183.5px;height:37px;border:2px solid #C8C8C8;background:#fff"></div>
<div class="t" style="left:1320.5px;top:1576px;font-size:22px;color:#333;">90</div>
<div class="a " style="left:1314px;top:1689px;width:183.5px;height:36.6px;border:2px solid #C8C8C8;background:#fff"></div>
<div class="t" style="left:1320.5px;top:1698px;font-size:22px;color:#333;">50</div>
<svg class="a" style="left:1314px;top:1617.8px" width="26" height="26"><rect x="0" y="0" width="26" height="26" rx="4" fill="#0B6EFD"/><path d="M5.5,13.5 L10.5,18.5 L20.5,7.5" fill="none" stroke="#fff" stroke-width="4"/></svg>
<div class="t" style="left:1348px;top:1616.5px;font-size:21px;color:#333;">A</div>
<div class="a " style="left:1380px;top:1617.8px;width:26px;height:26px;border:2px solid #767676;background:#fff;border-radius:4px"></div>
<div class="t" style="left:1414.8px;top:1616px;font-size:21px;color:#333;">B</div>
<div class="a " style="left:1444px;top:1617.8px;width:26px;height:26px;border:2px solid #767676;background:#fff;border-radius:4px"></div>
<div class="t" style="left:1477.8px;top:1616px;font-size:21px;color:#333;">C</div>
<div class="a " style="left:1510px;top:1617.8px;width:26px;height:26px;border:2px solid #767676;background:#fff;border-radius:4px"></div>
<div class="t" style="left:1544.5px;top:1616px;font-size:21px;color:#333;">D</div>
<div class="a " style="left:1576px;top:1617.8px;width:26px;height:26px;border:2px solid #767676;background:#fff;border-radius:4px"></div>
<div class="t" style="left:1611.5px;top:1616px;font-size:21px;color:#333;">E</div>
<div class="a " style="left:1640px;top:1617.8px;width:26px;height:26px;border:2px solid #767676;background:#fff;border-radius:4px"></div>
<div class="t" style="left:1673.8px;top:1616px;font-size:21px;color:#333;">F</div>
<div class="t" style="left:1710px;top:1616.7px;font-size:21.6px;color:#333;">통과</div>
<div class="a " style="left:1314px;top:1656px;width:26px;height:26px;border:2px solid #767676;background:#fff;border-radius:4px"></div>
<div class="t" style="left:1348px;top:1655.5px;font-size:21px;color:#333;">O</div>
<div class="a " style="left:1382px;top:1656px;width:26px;height:26px;border:2px solid #767676;background:#fff;border-radius:4px"></div>
<div class="t" style="left:1415.7px;top:1655.5px;font-size:21px;color:#333;">X</div>
<div class="t" style="left:1710px;top:1698.7px;font-size:21.6px;color:#333;">통과</div>
<div class="a " style="left:1504px;top:1564px;width:176px;height:40px;border:4px solid #DF350C;border-radius:5px;background:#fff"></div>
<div class="t" style="left:1511.6px;top:1573.25px;font-size:21.5px;color:#333;">진급평가</div>
<div class="a " style="left:1605.5px;top:1568px;width:2px;height:32px;background:#C8C8C8"></div>
<div class="t" style="left:1614px;top:1574.5px;font-size:22px;color:#333;">10</div>
<div class="a " style="left:1504px;top:1686.5px;width:176px;height:41.1px;border:4px solid #DF350C;border-radius:5px;background:#fff"></div>
<div class="t" style="left:1511.6px;top:1696.3px;font-size:21.5px;color:#333;">진급평가</div>
<div class="a " style="left:1605.5px;top:1690.5px;width:2px;height:33.1px;background:#C8C8C8"></div>
<div class="t" style="left:1614px;top:1697.55px;font-size:22px;color:#333;">20</div>
<svg class="a" style="left:1660px;top:1560px" width="140" height="150"><g fill="none" stroke="#DF350C" stroke-width="2.6"><path d="M17.6,22.5 H120 M103.4,22.5 V134 H17.6"/></g><circle cx="17.6" cy="22.5" r="5.3" fill="#DF350C"/><circle cx="17.6" cy="134" r="5.3" fill="#DF350C"/></svg>
<div class="a" style="left:1780px;top:1560px;width:48px;height:48px;border-radius:24px;background:#DF350C"></div>
<div class="t" style="left:1204px;width:1200px;text-align:center;top:1569.5px;font-size:31px;color:#fff;font-weight:bold;">3</div>
<div class="a " style="left:1950px;top:1628px;width:72px;height:37.4px;border:2px solid #C8C8C8;background:#fff"></div>
<div class="a " style="left:2052px;top:1578px;width:572px;height:111.5px;border:2px solid #C8C8C8;background:#fff"></div>
<svg class="a" style="left:2604px;top:1669.5px" width="18" height="18"><path d="M2,16 L16,2 M9,16 L16,9" stroke="#555" stroke-width="1.6"/></svg>
<div class="t" style="left:1424px;width:1200px;text-align:right;top:1695.5px;font-size:22px;color:#333;">0/2500</div>
</div></div>
</div></body></html>
